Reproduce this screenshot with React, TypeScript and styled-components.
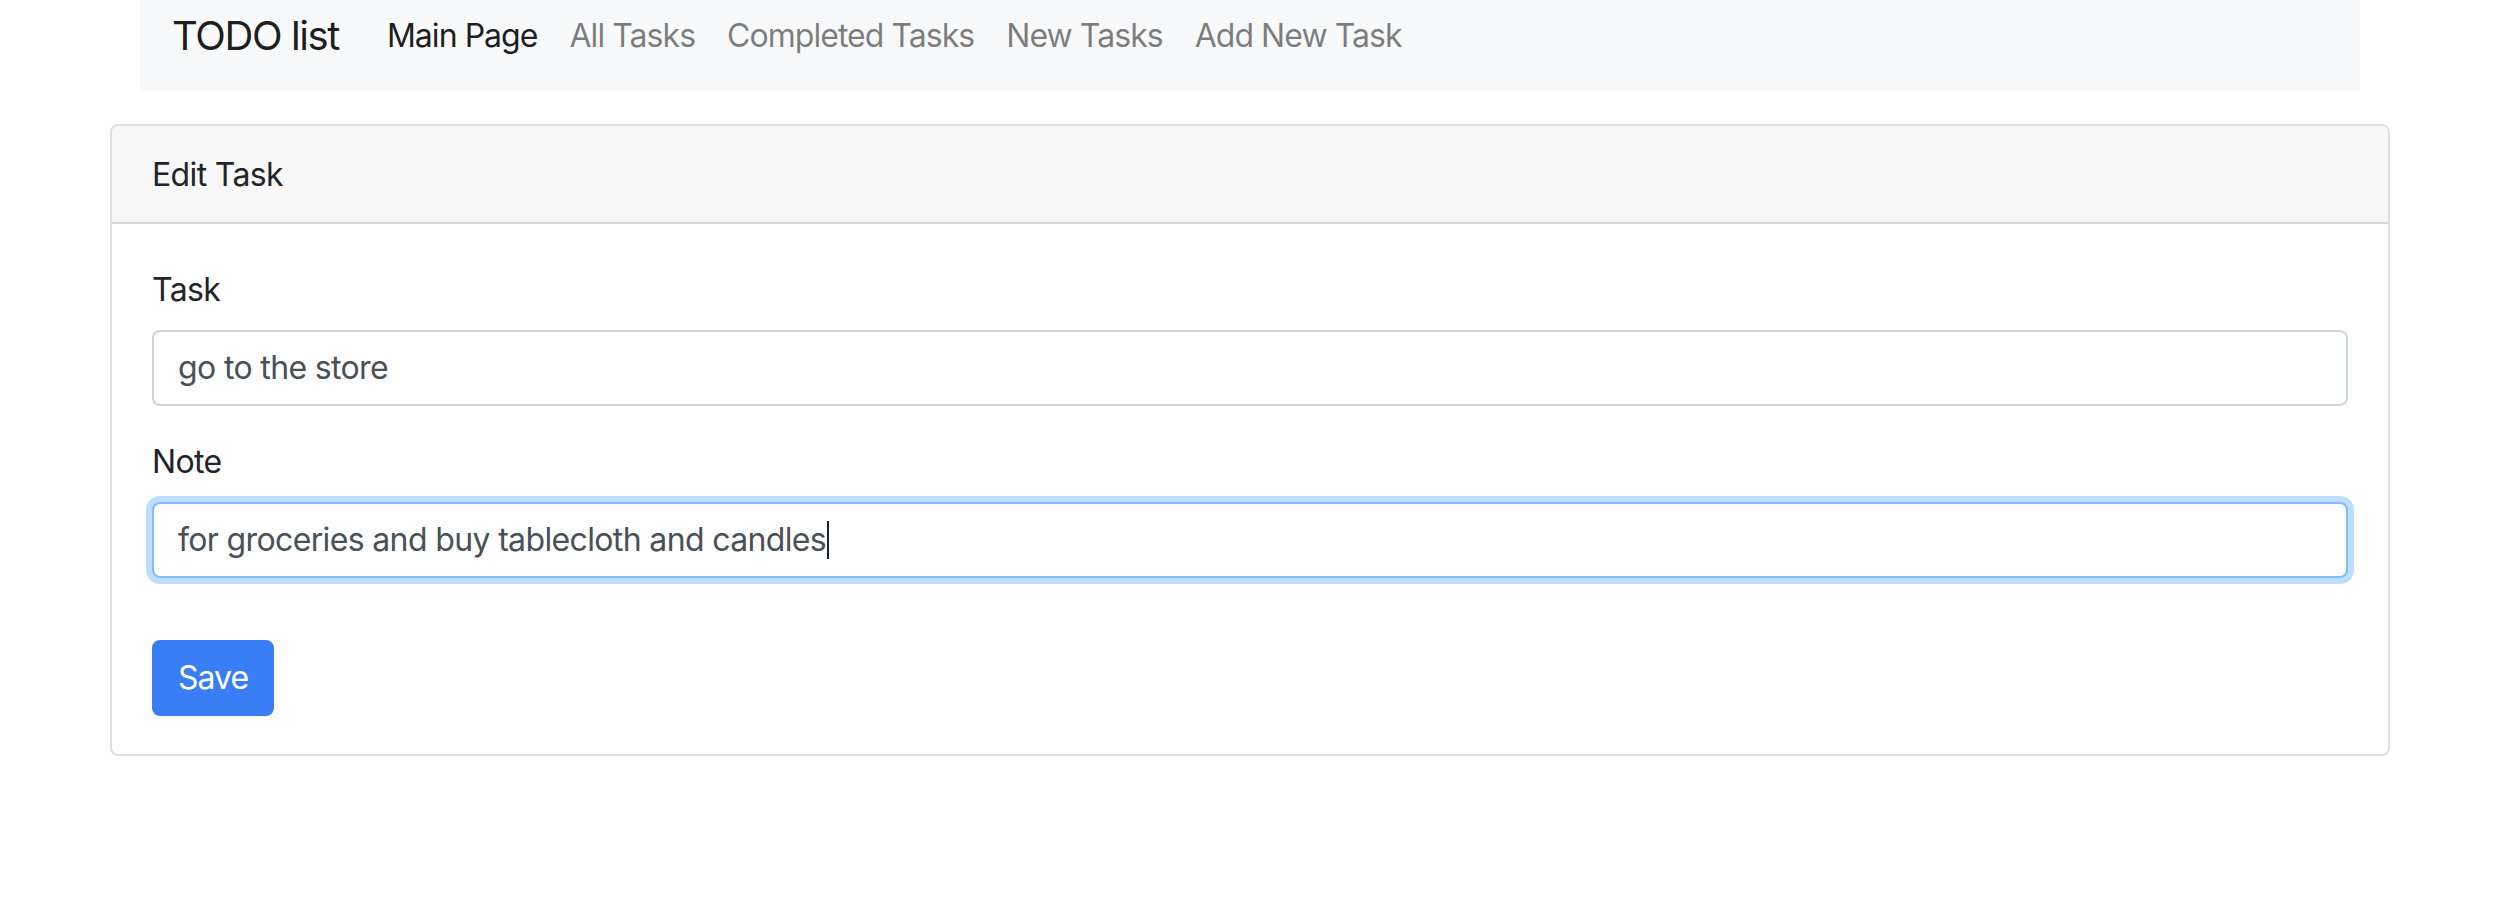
import styled, { createGlobalStyle } from 'styled-components';

const GlobalStyle = createGlobalStyle`
    html, body { margin:0;padding:0;background:#fff; }
    body { font-family: Inter, "Noto Sans", "Liberation Sans", sans-serif;font-size:32px;line-height:1.5;color:#212529;letter-spacing:-0.02em; }
    * { box-sizing:border-box; }
`

const navLinks = ['Main Page', 'All Tasks', 'Completed Tasks', 'New Tasks', 'Add New Task'];

const App = () => {
    return <>
        <GlobalStyle />
        <Container>
            <NavBar>
                <Brand>TODO list</Brand>
                <NavList>
                    {navLinks.map((name, i) => <NavLink key={name} $active={i === 0}>{name}</NavLink>)}
                </NavList>
            </NavBar>
            <Card>
                <CardHeader>Edit Task</CardHeader>
                <CardBody>
                    <FormGroup>
                        <Label>Task</Label>
                        <Field>go to the store</Field>
                    </FormGroup>
                    <FormGroup>
                        <Label>Note</Label>
                        <Field $focused>for groceries and buy tablecloth and candles<Caret /></Field>
                    </FormGroup>
                    <SaveButton type="button">Save</SaveButton>
                </CardBody>
            </Card>
        </Container>
    </>
}

const Container = styled.div`
    width:2280px;margin:0 0 0 110px;
`

const NavBar = styled.nav`
    display:flex;align-items:center;
    margin:0 30px;height:91px;padding:0 32px 20px;
    background-color:#f8f9fa;
`

const Brand = styled.a`
    font-size:40px;line-height:60px;letter-spacing:-0.035em;color:rgba(0,0,0,.9);margin-right:32px;
    white-space:nowrap;text-decoration:none;cursor:pointer;
`

const NavList = styled.ul`
    display:flex;list-style:none;margin:0;padding:0;
`

const NavLink = styled.li<{ $active?: boolean }>`
    padding:0 16px;font-size:32px;line-height:48px;letter-spacing:-0.03em;white-space:nowrap;cursor:pointer;
    color:${({ $active }) => $active ? 'rgba(0,0,0,.9)' : 'rgba(0,0,0,.5)'};
`

const Card = styled.section`
    margin-top:33px;
    border:2px solid rgba(0,0,0,.125);border-radius:8px;overflow:hidden;
`

const CardHeader = styled.header`
    padding:25px 40px 23px;background-color:rgba(0,0,0,.03);
    border-bottom:2px solid rgba(0,0,0,.125);
`

const CardBody = styled.div`
    padding:40px 40px 38px;
`

const FormGroup = styled.div`
    margin-bottom:32px;
    &:nth-of-type(2) { margin-bottom:62px; }
`

const Label = styled.label`
    display:block;margin-top:2px;margin-bottom:16px;
`

const Field = styled.div<{ $focused?: boolean }>`
    display:flex;align-items:center;height:76px;padding:0 24px;
    color:#495057;background:#fff;border-radius:8px;
    border:2px solid ${({ $focused }) => $focused ? '#80bdff' : '#ced4da'};
    box-shadow:${({ $focused }) => $focused ? '0 0 0 6px rgba(0,123,255,.25)' : 'none'};
`

const Caret = styled.span`
    display:inline-block;width:2px;height:38px;margin-left:1px;background:#212529;
`

const SaveButton = styled.button`
    display:block;height:76px;padding:0 24px;
    font:inherit;letter-spacing:-0.03em;color:#fff;background-color:#3a7ef6;
    border:2px solid #3a7ef6;border-radius:8px;cursor:pointer;
`

export default App;
